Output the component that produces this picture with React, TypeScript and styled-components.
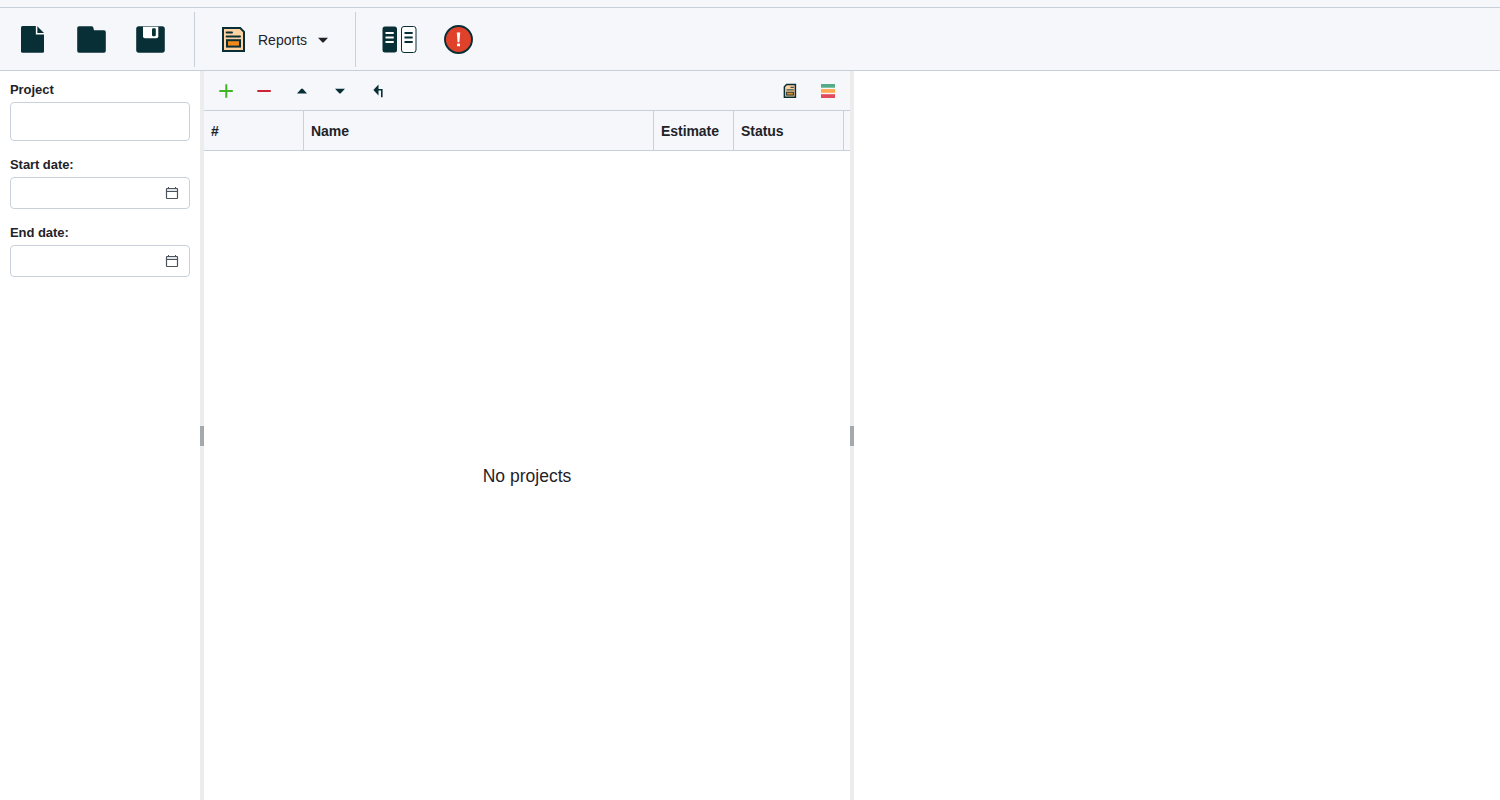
import React from 'react';
import styled, { createGlobalStyle } from 'styled-components';

const ink = '#092f36';
const line = '#c8d1da';
const panel = '#f5f7fb';

const GlobalStyle = createGlobalStyle`
  * { box-sizing: border-box; }
  html, body { margin: 0; overflow: hidden; }
  body { font-family: "Liberation Sans", Arial, sans-serif; font-size: 14px; color: #1f2328; background: #fff; }
  button { font: inherit; color: inherit; background: none; border: 0; padding: 0; margin: 0; }
  svg { display: block; }
`;

const Shell = styled.div`
  display: flex;
  flex-direction: column;
  height: 100vh;
`;

const TopStrip = styled.div`
  height: 8px;
  flex: none;
  background: ${panel};
  border-bottom: 1px solid ${line};
`;

const MainToolbar = styled.header`
  display: flex;
  align-items: center;
  flex: none;
  height: 63px;
  padding: 0 3px;
  background: ${panel};
  border-bottom: 1px solid ${line};
`;

const ToolButton = styled.button`
  display: flex;
  align-items: center;
  justify-content: center;
  width: 59px;
  height: 59px;
`;

const Divider = styled.span<{ $before?: number; $after?: number }>`
  width: 1px;
  height: 55px;
  margin: 0 ${p => p.$after ?? 0}px 0 ${p => p.$before ?? 0}px;
  background: ${line};
`;

const ReportsButton = styled.button`
  display: flex;
  align-items: center;
  width: 134px;
  height: 56px;
  padding-left: 8px;
`;

const ReportsLabel = styled.span`
  width: 49px;
  margin: 1px 11px 0 12px;
  text-align: left;
`;

const MenuArrow = styled.span`
  padding-top: 2px;
`;

const Workspace = styled.main`
  display: flex;
  flex: 1;
  min-height: 0;
`;

const Sidebar = styled.aside`
  width: 200px;
  padding: 10px;
  flex: none;
`;

const Field = styled.label<{ $gap: number }>`
  display: block;
  margin-bottom: ${p => p.$gap}px;
`;

const FieldLabel = styled.span`
  display: block;
  height: 21px;
  font-size: 13px;
  letter-spacing: -0.06px;
  line-height: 17px;
  font-weight: 700;
`;

const InputBox = styled.span<{ $height: number }>`
  display: flex;
  align-items: center;
  height: ${p => p.$height}px;
  padding: 0 10px 0 8px;
  border: 1px solid ${line};
  border-radius: 4px;
  background: #fff;
`;

const Input = styled.input`
  flex: 1;
  min-width: 0;
  border: 0;
  outline: 0;
  padding: 0;
  font: inherit;
  background: transparent;
`;

const Splitter = styled.div`
  display: flex;
  align-items: center;
  width: 4px;
  flex: none;
  background: #ececec;
`;

const Grip = styled.span`
  width: 4px;
  height: 20px;
  background: #a3a9ad;
`;

const GridPanel = styled.section`
  display: flex;
  flex-direction: column;
  width: 646px;
  flex: none;
`;

const GridToolbar = styled.div`
  display: flex;
  align-items: center;
  height: 40px;
  flex: none;
  padding: 0 3px;
  background: ${panel};
  border-bottom: 1px solid ${line};
`;

const SmallButton = styled.button<{ $push?: boolean }>`
  display: flex;
  align-items: center;
  justify-content: center;
  width: 38px;
  height: 38px;
  margin-left: ${p => (p.$push ? 'auto' : '0')};
`;

const HeaderRow = styled.div`
  display: flex;
  height: 40px;
  flex: none;
  background: ${panel};
  border-bottom: 1px solid ${line};
`;

const HeaderCell = styled.div<{ $width: number }>`
  width: ${p => p.$width}px;
  padding-left: 7px;
  line-height: 40px;
  font-weight: 700;
  letter-spacing: -0.05px;
  border-right: 1px solid ${line};
`;

const EmptyState = styled.div`
  display: flex;
  align-items: center;
  justify-content: center;
  flex: 1;
  padding-top: 2px;
  font-size: 17.5px;
`;

const FileIcon = () => (
  <svg width="24" height="27" viewBox="0 0 24 27">
    <path d="M1.5 0H16L23 7V25.2Q23 26.7 21.5 26.7H1.5Q0 26.7 0 25.2V1.5Q0 0 1.5 0Z" fill={ink} />
    <path d="M15.6 0V7.7H23.4" fill="none" stroke="#fff" strokeWidth="1.5" />
  </svg>
);

const FolderIcon = () => (
  <svg width="29" height="27" viewBox="0 0 29 27">
    <path d="M2 .2H14.5Q16 .2 16.3 1.5L17 4.2H27Q28.8 4.2 28.8 6V24.8Q28.8 26.7 27 26.7H2Q.2 26.7 .2 24.8V2Q.2 .2 2 .2Z" fill={ink} />
  </svg>
);

const SaveIcon = () => (
  <svg width="29" height="27" viewBox="0 0 29 27">
    <rect x=".2" y=".2" width="28.6" height="26.5" rx="2.6" fill={ink} />
    <path d="M7 .8H22.3V10.2Q22.3 12.2 20.3 12.2H9Q7 12.2 7 10.2Z" fill="#fff" />
    <rect x="16" y="2.2" width="3.8" height="8" rx="1.2" fill={ink} />
  </svg>
);

const ReportIcon = () => (
  <svg width="24" height="27" viewBox="0 0 24 27">
    <path d="M1 2H18.2L22 5.8V25H1Z" fill="#ffd2a1" stroke={ink} strokeWidth="2" />
    <path d="M4.6 6.5H10M4.6 10.5H18" stroke={ink} strokeWidth="2" strokeLinecap="round" />
    <rect x="5" y="14.2" width="13" height="6.4" fill="#f0881a" stroke={ink} strokeWidth="2" />
  </svg>
);

const SmallReportIcon = () => (
  <svg width="14" height="16" viewBox="0 0 14 16">
    <path d="M3.6 1.5H12.4V14.3H1.4V3.7Z" fill="#ffd2a1" stroke={ink} strokeWidth="1.5" />
    <path d="M7.5 4.4H10.8M3.5 6.9H10.8" stroke={ink} strokeOpacity=".8" strokeWidth="1.4" />
    <rect x="3.6" y="9.2" width="6.8" height="2.9" fill="#e98a22" stroke={ink} strokeOpacity=".85" strokeWidth="1.1" />
  </svg>
);

const ColumnsIcon = () => (
  <svg width="35" height="27" viewBox="0 0 35 27">
    <rect x=".5" y=".5" width="14.5" height="26" rx="2.5" fill={ink} />
    <path d="M3.5 6.9H11.7M3.5 11.4H11.7M3.5 16H11.7" stroke="#fff" strokeWidth="2" />
    <rect x="19.5" y=".5" width="14.5" height="26" rx="2.5" fill="#fff" stroke={ink} />
    <path d="M22.5 6.9H30.7M22.5 11.4H30.7M22.5 16H30.7" stroke={ink} strokeWidth="2" />
  </svg>
);

const AlertIcon = () => (
  <svg width="29" height="29" viewBox="0 0 29 29">
    <circle cx="14.5" cy="14.5" r="13.5" fill="#e0412a" stroke={ink} strokeWidth="1.9" />
    <path d="M12.8 7.4H16.2L15.4 17.3H13.6Z" fill="#fff" />
    <rect x="13" y="18.5" width="3" height="2.8" rx=".6" fill="#fff" />
  </svg>
);

const CaretIcon = ({ up, color = ink }: { up?: boolean; color?: string }) => (
  <svg width="10" height="6" viewBox="0 0 10 6">
    <path d={up ? 'M0 5.5L4 1.1Q5 .1 6 1.1L10 5.5Z' : 'M0 .8H10L6 5.1Q5 6.1 4 5.1Z'} fill={color} />
  </svg>
);

const PlusIcon = () => (
  <svg width="14" height="14" viewBox="0 0 14 14">
    <path d="M.3 7H13.8M7.3 .3V13.8" stroke="#3fb526" strokeWidth="2" />
  </svg>
);

const MinusIcon = () => (
  <svg width="14" height="14" viewBox="0 0 14 14">
    <path d="M.3 7H13.8" stroke="#cc2434" strokeWidth="2" />
  </svg>
);

const ReturnIcon = () => (
  <svg width="10" height="14" viewBox="0 0 10 14">
    <path d="M.4 6L5.5 .6V11.4Z" fill={ink} />
    <path d="M5 5.7H8.8V13.2" fill="none" stroke={ink} strokeWidth="1.6" />
  </svg>
);

const BarsIcon = () => (
  <svg width="14" height="14" viewBox="0 0 14 14">
    <rect width="14" height="3.7" fill="#55aa88" />
    <rect y="5.1" width="14" height="3.7" fill="#ffaa50" />
    <rect y="10.2" width="14" height="3.8" fill="#e24b5b" />
  </svg>
);

const CalendarIcon = () => (
  <svg width="14" height="14" viewBox="0 0 14 14">
    <path d="M2 3H12V5H2Z" fill="#e3e6e9" />
    <rect x="1.5" y="2.5" width="11" height="10" rx=".5" fill="none" stroke="#4c535d" strokeWidth="1.2" />
    <path d="M1.5 5.5H12.5M3.5 1V3M10.5 1V3" stroke="#4c535d" />
  </svg>
);

const columns = [
  { title: '#', width: 100 },
  { title: 'Name', width: 350 },
  { title: 'Estimate', width: 80 },
  { title: 'Status', width: 110 },
];

const DateField = ({ label }: { label: string }) => (
  <Field $gap={15}>
    <FieldLabel>{label}</FieldLabel>
    <InputBox $height={32}>
      <Input />
      <CalendarIcon />
    </InputBox>
  </Field>
);

export default function App() {
  return (
    <Shell>
      <GlobalStyle />
      <TopStrip />
      <MainToolbar>
        <ToolButton aria-label="New"><FileIcon /></ToolButton>
        <ToolButton aria-label="Open"><FolderIcon /></ToolButton>
        <ToolButton aria-label="Save"><SaveIcon /></ToolButton>
        <Divider $before={14} $after={19} />
        <ReportsButton>
          <ReportIcon />
          <ReportsLabel>Reports</ReportsLabel>
          <MenuArrow><CaretIcon color="#1f2328" /></MenuArrow>
        </ReportsButton>
        <Divider $before={7} $after={14} />
        <ToolButton aria-label="Layout"><ColumnsIcon /></ToolButton>
        <ToolButton aria-label="Alerts"><AlertIcon /></ToolButton>
      </MainToolbar>
      <Workspace>
        <Sidebar>
          <Field $gap={15}>
            <FieldLabel>Project</FieldLabel>
            <InputBox $height={39}><Input /></InputBox>
          </Field>
          <DateField label="Start date:" />
          <DateField label="End date:" />
        </Sidebar>
        <Splitter><Grip /></Splitter>
        <GridPanel>
          <GridToolbar>
            <SmallButton aria-label="Add"><PlusIcon /></SmallButton>
            <SmallButton aria-label="Remove"><MinusIcon /></SmallButton>
            <SmallButton aria-label="Move up"><CaretIcon up /></SmallButton>
            <SmallButton aria-label="Move down"><CaretIcon /></SmallButton>
            <SmallButton aria-label="Outdent"><ReturnIcon /></SmallButton>
            <SmallButton $push aria-label="Report"><SmallReportIcon /></SmallButton>
            <SmallButton aria-label="Gantt"><BarsIcon /></SmallButton>
          </GridToolbar>
          <HeaderRow>
            {columns.map(c => (
              <HeaderCell key={c.title} $width={c.width}>{c.title}</HeaderCell>
            ))}
          </HeaderRow>
          <EmptyState>No projects</EmptyState>
        </GridPanel>
        <Splitter><Grip /></Splitter>
      </Workspace>
    </Shell>
  );
}
